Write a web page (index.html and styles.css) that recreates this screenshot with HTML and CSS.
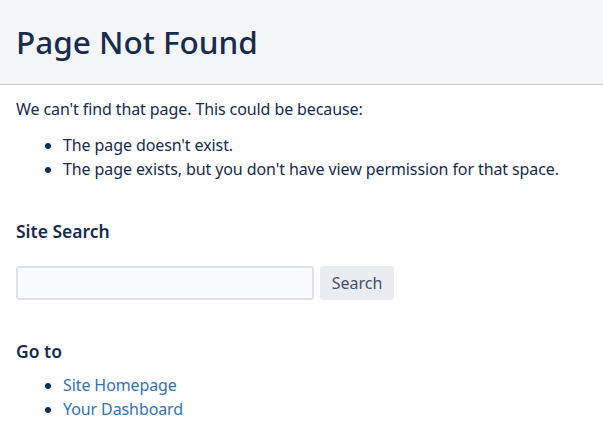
FILE: index.html
```html
<!DOCTYPE html>
<html lang="en">

<head>
    <meta charset="UTF-8">
    <meta name="viewport" content="width=device-width, initial-scale=1.0">
    <title>Page Not Found</title>
    <link rel="stylesheet" href="styles.css">
</head>

<body>
    <div class="page-header">
        <h1>Page Not Found</h1>
    </div>

    <div class="content">
        <p class="intro">We can't find that page. This could be because:</p>
        <ul class="reasons">
            <li>The page doesn't exist.</li>
            <li>The page exists, but you don't have view permission for that space.</li>
        </ul>

        <h3 class="section-title search-title">Site Search</h3>
        <form class="search-form">
            <input type="text" class="search-input">
            <button type="button" class="search-button">Search</button>
        </form>

        <h3 class="section-title goto-title">Go to</h3>
        <ul class="links">
            <li><a href="#">Site Homepage</a></li>
            <li><a href="#">Your Dashboard</a></li>
        </ul>
    </div>
</body>

</html>
```

FILE: styles.css
```css
* {
    padding: 0;
    margin: 0;
    box-sizing: border-box;
}

body {
    font-family: "Noto Sans", "Open Sans", sans-serif;
    font-size: 16px;
    line-height: 24px;
    letter-spacing: -0.1px;
    color: #172b4d;
    background-color: #fff;
}

.page-header {
    background-color: #f4f5f7;
    border-bottom: 1px solid #cccccc;
    height: 85px;
    padding: 22px 16px 0;
}

.page-header h1 {
    font-size: 31.5px;
    line-height: 40px;
    font-weight: 500;
    letter-spacing: 0;
    color: #172b4d;
}

.content {
    padding: 0 16px;
}

.intro {
    margin-top: 12px;
}

.reasons,
.links {
    padding-left: 47px;
    margin-top: 12px;
}

.section-title {
    font-size: 17.5px;
    font-weight: 600;
    line-height: 24px;
    letter-spacing: 0;
}

.search-title {
    margin-top: 38px;
}

.search-form {
    display: flex;
    gap: 6px;
    margin-top: 23px;
}

.search-input {
    width: 298px;
    height: 34px;
    background-color: #fafbfc;
    border: 2px solid #dfe1e6;
    border-radius: 3px;
    font-family: inherit;
    font-size: 16px;
    padding: 0 8px;
}

.search-button {
    width: 74px;
    height: 34px;
    background-color: #ebecf0;
    border: none;
    border-radius: 3px;
    color: #42526e;
    font-family: inherit;
    font-size: 16px;
}

.goto-title {
    margin-top: 39px;
}

.links {
    margin-top: 10px;
}

.links a {
    color: #3572b0;
    text-decoration: none;
}
```
